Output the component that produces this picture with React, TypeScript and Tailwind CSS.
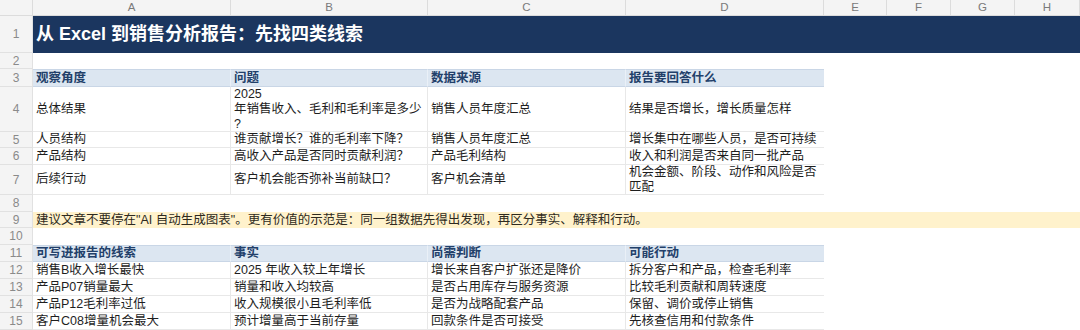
import React from "react";

const cols = ["A", "B", "C", "D", "E", "F", "G", "H"];

type Row = [string, string, string, string];

const table1: Row[] = [
  ["总体结果", "", "销售人员年度汇总", "结果是否增长，增长质量怎样"],
  ["人员结构", "谁贡献增长？谁的毛利率下降？", "销售人员年度汇总", "增长集中在哪些人员，是否可持续"],
  ["产品结构", "高收入产品是否同时贡献利润？", "产品毛利结构", "收入和利润是否来自同一批产品"],
  ["后续行动", "客户机会能否弥补当前缺口？", "客户机会清单", ""],
];

const table2: Row[] = [
  ["销售B收入增长最快", "2025 年收入较上年增长", "增长来自客户扩张还是降价", "拆分客户和产品，检查毛利率"],
  ["产品P07销量最大", "销量和收入均较高", "是否占用库存与服务资源", "比较毛利贡献和周转速度"],
  ["产品P12毛利率过低", "收入规模很小且毛利率低", "是否为战略配套产品", "保留、调价或停止销售"],
  ["客户C08增量机会最大", "预计增量高于当前存量", "回款条件是否可接受", "先核查信用和付款条件"],
];

function RowNum({ n }: { n: number }) {
  return (
    <div className="flex items-center justify-center bg-[#f4f4f4] border-b border-r border-[#e1e1e1] text-[12px] text-[#8a8a8a]">
      {n}
    </div>
  );
}

function Cell({ children, last }: { children?: React.ReactNode; last?: boolean }) {
  return (
    <div
      className={
        last
          ? "flex items-center px-[3px] overflow-hidden border-b border-[#e8e8e8] text-[12.5px] leading-[15px] text-[#1e1e1e]"
          : "flex items-center px-[3px] overflow-hidden border-b border-r border-[#e8e8e8] text-[12.5px] leading-[15px] text-[#1e1e1e]"
      }
    >
      {children}
    </div>
  );
}

function HeadCell({ children, last }: { children?: React.ReactNode; last?: boolean }) {
  return (
    <div
      className={
        last
          ? "flex items-center px-[3px] bg-[#dce6f1] border-t border-b border-[#c9d6e6] text-[12.5px] font-semibold text-[#22406a]"
          : "flex items-center px-[3px] bg-[#dce6f1] border-t border-b border-r border-t-[#c9d6e6] border-b-[#c9d6e6] border-r-[#eaf0f7] text-[12.5px] font-semibold text-[#22406a]"
      }
    >
      {children}
    </div>
  );
}

function Blanks({ n }: { n: number }) {
  return (
    <>
      {Array.from({ length: n }).map((_, i) => (
        <div key={i} className="bg-white" />
      ))}
    </>
  );
}

export default function App() {
  return (
    <div className="w-[1080px] h-[330px] overflow-hidden bg-white font-['Liberation_Sans','Noto_Sans_CJK_SC',sans-serif]">
      <div className="grid grid-cols-[33px_198px_197px_198px_198px_63px_64px_64px_65px] grid-rows-[16px_37px_16px_18px_45px_16px_17px_30px_17px_16px_17px_17px_17px_17px_17px_17px]">
        {/* column header */}
        <div className="bg-[#f4f4f4] border-b border-r border-[#dcdcdc]" />
        {cols.map((c) => (
          <div
            key={c}
            className="flex items-center justify-center bg-[#f4f4f4] border-b border-r border-[#dcdcdc] text-[11.5px] text-[#7a7a7a]"
          >
            {c}
          </div>
        ))}

        {/* row 1 title */}
        <RowNum n={1} />
        <div className="col-span-8 flex items-center pl-[3px] bg-[#1b365f] text-[18px] font-bold text-white">
          从 Excel 到销售分析报告：先找四类线索
        </div>

        {/* row 2 */}
        <RowNum n={2} />
        <Blanks n={8} />

        {/* row 3 header */}
        <RowNum n={3} />
        <HeadCell>观察角度</HeadCell>
        <HeadCell>问题</HeadCell>
        <HeadCell>数据来源</HeadCell>
        <HeadCell last>报告要回答什么</HeadCell>
        <Blanks n={4} />

        {/* rows 4-7 */}
        {table1.map((r, i) => (
          <React.Fragment key={i}>
            <RowNum n={4 + i} />
            <Cell>{r[0]}</Cell>
            <Cell>
              {i === 0 ? (
                <div className="flex flex-col">
                  <span>2025</span>
                  <span>年销售收入、毛利和毛利率是多少</span>
                  <span>?</span>
                </div>
              ) : (
                r[1]
              )}
            </Cell>
            <Cell>{r[2]}</Cell>
            <Cell last>
              {i === 3 ? (
                <div className="flex flex-col">
                  <span>机会金额、阶段、动作和风险是否</span>
                  <span>匹配</span>
                </div>
              ) : (
                r[3]
              )}
            </Cell>
            <Blanks n={4} />
          </React.Fragment>
        ))}

        {/* row 8 */}
        <RowNum n={8} />
        <Blanks n={8} />

        {/* row 9 note */}
        <RowNum n={9} />
        <div className="col-span-8 flex items-center pl-[3px] bg-[#fff2cc] text-[12.5px] text-[#2e2a20] whitespace-nowrap">
          <span>建议文章不要停在</span>
          <span className="font-['Liberation_Sans',sans-serif]">"AI</span>
          <span>&nbsp;自动生成图表</span>
          <span className="font-['Liberation_Sans',sans-serif]">"</span>
          <span>。更有价值的示范是：同一组数据先得出发现，再区分事实、解释和行动。</span>
        </div>

        {/* row 10 */}
        <RowNum n={10} />
        <Blanks n={8} />

        {/* row 11 header */}
        <RowNum n={11} />
        <HeadCell>可写进报告的线索</HeadCell>
        <HeadCell>事实</HeadCell>
        <HeadCell>尚需判断</HeadCell>
        <HeadCell last>可能行动</HeadCell>
        <Blanks n={4} />

        {/* rows 12-15 */}
        {table2.map((r, i) => (
          <React.Fragment key={i}>
            <RowNum n={12 + i} />
            <Cell>{r[0]}</Cell>
            <Cell>{r[1]}</Cell>
            <Cell>{r[2]}</Cell>
            <Cell last>{r[3]}</Cell>
            <Blanks n={4} />
          </React.Fragment>
        ))}
      </div>
    </div>
  );
}
